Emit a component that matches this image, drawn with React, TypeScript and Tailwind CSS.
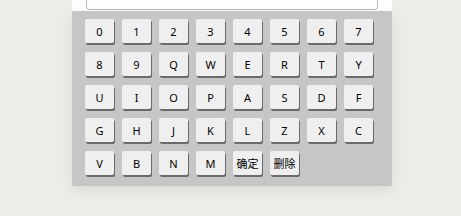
const keys = [
  "0", "1", "2", "3", "4", "5", "6", "7",
  "8", "9", "Q", "W", "E", "R", "T", "Y",
  "U", "I", "O", "P", "A", "S", "D", "F",
  "G", "H", "J", "K", "L", "Z", "X", "C",
  "V", "B", "N", "M", "确定", "删除",
];

const Key = ({ label }: { label: string }) => (
  <button className="h-[24px] w-[29px] rounded-[2px] bg-[#efefef] text-[11px] leading-none text-black shadow-[1px_2px_0_#6b6b6b]">
    {label}
  </button>
);

export default function App() {
  return (
    <div
      className="min-h-[216px] w-full overflow-hidden bg-[#edece8]"
      style={{ fontFamily: '"Noto Sans", "Noto Sans CJK SC", sans-serif' }}
    >
      <div className="ml-[72px] w-[320px]">
        <div className="-mt-[30px] bg-white px-[14px] pb-[1px]">
          <div className="h-[40px] rounded-b-[4px] border border-t-0 border-[#b9b9b9] bg-white" />
        </div>
        <div className="bg-[#c6c6c6] pb-[11px] pl-[13px] pt-[8px] shadow-[0_4px_12px_rgba(0,0,0,0.08)]">
          <div className="grid grid-cols-[repeat(8,29px)] gap-x-[8px] gap-y-[9px]">
            {keys.map((k) => (
              <Key key={k} label={k} />
            ))}
          </div>
        </div>
      </div>
    </div>
  );
}
